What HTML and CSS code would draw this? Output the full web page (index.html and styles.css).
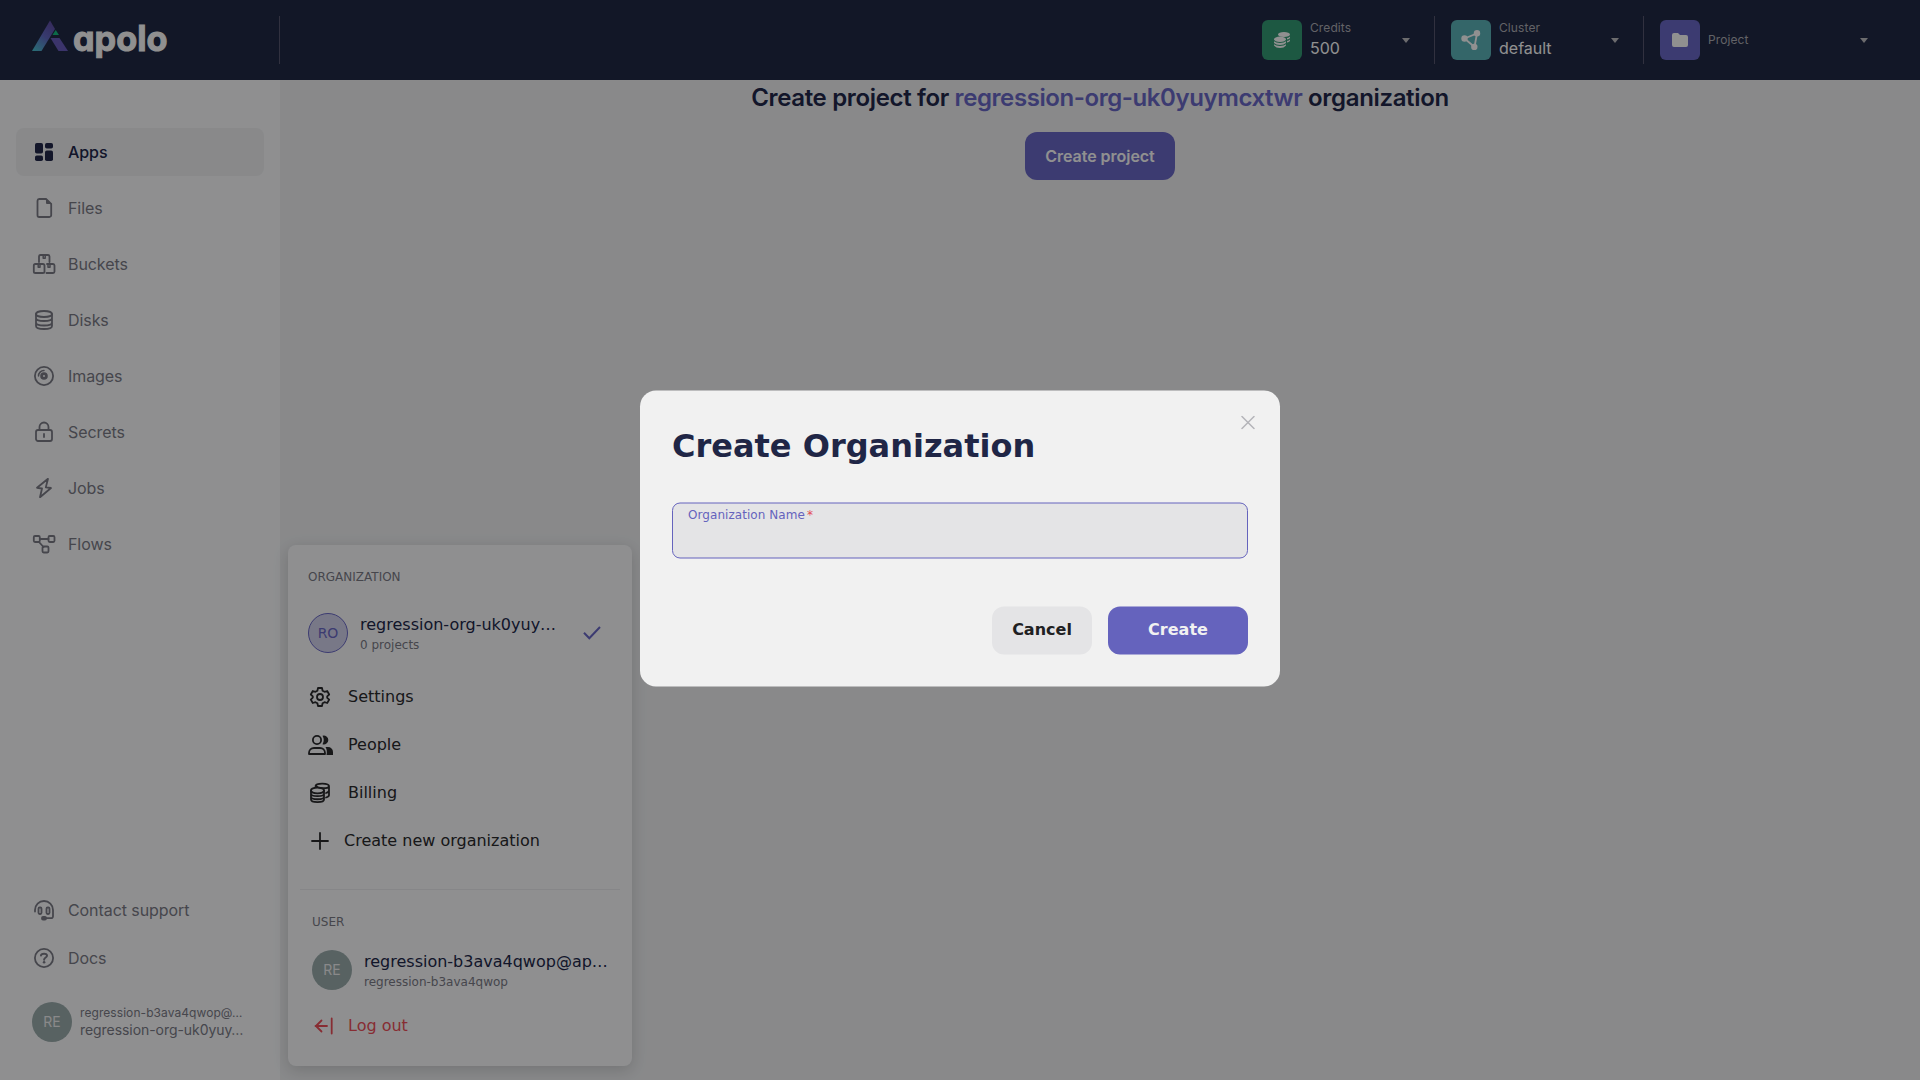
FILE: index.html
```html
<!DOCTYPE html>
<html lang="en">
<head>
<meta charset="utf-8">
<title>Apolo Console</title>
<link rel="stylesheet" href="styles.css">
</head>
<body>
<div class="app">
  <header class="header">
    <div class="brand">
      <svg class="logo" width="140" height="48" viewBox="0 0 140 48">
        <defs>
          <linearGradient id="g1" x1="0.1" y1="1" x2="0.7" y2="0"><stop offset="0" stop-color="#46b4c4"/><stop offset=".55" stop-color="#5c62b8"/><stop offset="1" stop-color="#5a4a9c"/></linearGradient>
        </defs>
        <path d="M18 4.500L23 13L9.500 35H0Z" fill="url(#g1)"/>
        <path d="M18.500 22H27.500L36 35H26.500Z" fill="#6358b2"/>
        <path d="M23.700 14L27 19H20.500Z" fill="#14b27a"/>
        <text class="logo-text" x="41" y="35" textLength="94.500" lengthAdjust="spacingAndGlyphs">apolo</text>
      </svg>
    </div>
    <div class="switchers">
      <div class="switcher credits">
        <span class="tile green"><svg width="16" height="16" viewBox="0 0 16 16" fill="currentColor"><ellipse cx="10" cy="2.500" rx="6" ry="2.500"/><ellipse cx="6" cy="7.300" rx="6" ry="2.700"/><path d="M0 9.300Q2 11 6 11T12 9.300V11Q10 13 6 13T0 11ZM0 12.300Q2 14 6 14T12 12.300V13.500Q10 16 6 16T0 13.500ZM13 6Q15 5.500 16 4.500V6Q15.300 7 13 7.600ZM13 9Q15 8.500 16 7.500V9Q15 10.200 13 10.600Z"/></svg></span>
        <span class="meta"><small>Credits</small><b>500</b></span><i class="caret"></i>
      </div>
      <div class="switcher cluster">
        <span class="tile teal"><svg width="20" height="20" viewBox="0 0 20 20"><path d="M3.500 8.500L16 3.500L13.500 17Z" fill="none" stroke="currentColor" stroke-width="1.800"/><g fill="currentColor"><circle cx="3.500" cy="8.500" r="3.200"/><circle cx="16" cy="3.300" r="3.200"/><circle cx="13.300" cy="17" r="3.200"/></g></svg></span>
        <span class="meta"><small>Cluster</small><b>default</b></span><i class="caret"></i>
      </div>
      <div class="switcher project">
        <span class="tile purple"><svg width="16" height="14" viewBox="0 0 16 14" fill="currentColor"><path d="M2 0H6L8 2H14A2 2 0 0 1 16 4V12A2 2 0 0 1 14 14H2A2 2 0 0 1 0 12V2A2 2 0 0 1 2 0Z"/></svg></span>
        <span class="meta"><small>Project</small></span><i class="caret"></i>
      </div>
    </div>
  </header>
  <div class="body">
    <aside class="sidebar">
      <nav class="nav">
        <a class="item active"><svg class="icon" viewBox="0 0 24 24"><g fill="currentColor"><rect x="3" y="3" width="8" height="10.500" rx="1.800"/><rect x="13" y="3" width="8" height="5.500" rx="1.800"/><rect x="3" y="15.500" width="8" height="5.500" rx="1.800"/><rect x="13" y="10.500" width="8" height="10.500" rx="1.800"/></g></svg>Apps</a>
        <a class="item"><svg class="icon" viewBox="0 0 24 24"><path d="M7.200 3H14L19.200 8V19.200A1.800 1.800 0 0 1 17.400 21H7.200A1.800 1.800 0 0 1 5.500 19.200V4.700A1.800 1.800 0 0 1 7.200 3Z"/><path d="M14 2.500L19.500 8H15A1 1 0 0 1 14 7Z" fill="currentColor" stroke="none"/></svg>Files</a>
        <a class="item"><svg class="icon" viewBox="0 0 24 24"><path d="M7 10V4.500A1.500 1.500 0 0 1 8.500 3H16A1.500 1.500 0 0 1 17.500 4.500V10"/><rect x="1.800" y="12" width="10.700" height="9" rx="1.600"/><path d="M15 12H21A1.600 1.600 0 0 1 22.500 13.600V19.400A1.600 1.600 0 0 1 21 21H14.500"/><path d="M11.200 3.500V6.200H13.200V3.500M6.200 12.500V15.200H8V12.500M16 12.500V15.200H18V12.500" stroke-width="1.500"/></svg>Buckets</a>
        <a class="item"><svg class="icon" viewBox="0 0 24 24"><ellipse cx="12" cy="6" rx="8" ry="3"/><path d="M4 6V18C4 22 20 22 20 18V6M4 10C4 14 20 14 20 10M4 14.500C4 18.500 20 18.500 20 14.500"/></svg>Disks</a>
        <a class="item"><svg class="icon" viewBox="0 0 24 24"><circle cx="12" cy="12" r="9.100"/><circle cx="12" cy="12" r="2.400" stroke-width="2.800"/><path d="M6.500 12A5.500 5.500 0 0 1 12 6.500" stroke-width="1.500"/></svg>Images</a>
        <a class="item"><svg class="icon" viewBox="0 0 24 24"><rect x="4" y="10" width="16" height="11" rx="2"/><path d="M7.500 10V7A4.400 4.400 0 0 1 16.500 7V10M12 14V17"/></svg>Secrets</a>
        <a class="item"><svg class="icon" viewBox="0 0 24 24"><path d="M16 2.800L5 11.800L10 12.500L8 21.200L19 12L13.800 11.400Z"/></svg>Jobs</a>
        <a class="item"><svg class="icon" viewBox="0 0 24 24"><rect x="1.800" y="4" width="6" height="6" rx="1.200"/><rect x="16.500" y="4" width="6" height="6" rx="1.200"/><rect x="10.500" y="14.500" width="6" height="6" rx="1.200"/><path d="M8 7H16.500M7 10L11.500 15"/></svg>Flows</a>
      </nav>
      <div class="foot">
        <a class="item"><svg class="icon" viewBox="0 0 24 24"><path d="M3 13.500V12A9 9 0 0 1 21 12V18.300A1.800 1.800 0 0 1 19.200 20.200H13"/><rect x="6.500" y="9.500" width="3" height="6.500" rx="1.200"/><rect x="14.500" y="9.500" width="3" height="6.500" rx="1.200"/><rect x="10" y="19" width="4" height="2.500" rx="1" fill="currentColor"/></svg>Contact support</a>
        <a class="item"><svg class="icon" viewBox="0 0 24 24"><circle cx="12" cy="12" r="9.100"/><path d="M9 9.500C9.200 7.200 15 6.800 15 9.800C15 11.600 12.100 11.500 12.100 13.700" stroke-width="2"/><circle cx="12.100" cy="16.300" r="1.300" fill="currentColor" stroke="none"/></svg>Docs</a>
      </div>
      <div class="account">
        <span class="avatar grey">RE</span>
        <span class="who"><small>regression-b3ava4qwop@…</small><b>regression-org-uk0yuy…</b></span>
      </div>
    </aside>
    <main class="main">
      <h1>Create project for <em>regression-org-uk0yuymcxtwr</em> organization</h1>
      <button class="primary">Create project</button>
    </main>
  </div>
</div>

<section class="menu">
  <h2 class="caption">ORGANIZATION</h2>
  <div class="person org">
    <span class="avatar lilac">RO</span>
    <span class="lines"><b>regression-org-uk0yuy…</b><small>0 projects</small></span>
    <svg class="check" width="18" height="14" viewBox="0 0 18 14"><path d="M1 6.800L6.300 12.300L17 1" /></svg>
  </div>
  <a class="row"><svg class="icon" viewBox="0 0 24 24"><path d="M10 3H14L14.600 5.700L16.500 6.800L19.200 6L21.200 9.500L19.200 11.400V12.800L21.200 14.600L19.200 18L16.500 17.200L14.600 18.300L14 21H10L9.400 18.300L7.500 17.200L4.800 18L2.800 14.600L4.800 12.700V11.400L2.800 9.500L4.800 6L7.500 6.800L9.400 5.700Z"/><circle cx="12" cy="12" r="3"/></svg><span>Settings</span></a>
  <a class="row"><svg class="icon wide" viewBox="0 0 25 24"><circle cx="9" cy="7" r="4.100"/><path d="M1 21V20A5 5 0 0 1 6 15H12A5 5 0 0 1 17 20V21Z"/><path d="M14.500 2.700A4.500 4.500 0 1 1 14.500 11.300Q17 7 14.500 2.700ZM17.500 14H20A5 5 0 0 1 25 19V22H18.500Q19.500 17 17.500 14Z" fill="currentColor" stroke="none"/></svg><span>People</span></a>
  <a class="row"><svg class="icon" viewBox="0 0 24 24"><ellipse cx="9.500" cy="9.500" rx="6.500" ry="2.800"/><path d="M3 9.500V18.500C3 22 16 22 16 18.500V9.500M3 12.800C3 16 16 16 16 12.800M3 16C3 19 16 19 16 16M7.500 5.200C8 1.800 21 1.800 21 5.500V14C21 15 20 16 18 16.500M8 4.500C9 7.500 21 8.500 21 5M21 9.500C21 10.700 20 11.300 18 12"/></svg><span>Billing</span></a>
  <a class="row create"><svg class="icon" viewBox="0 0 24 24"><path d="M12 4V20M4 12H20"/></svg><span>Create new organization</span></a>
  <hr>
  <h2 class="caption user">USER</h2>
  <div class="person">
    <span class="avatar grey">RE</span>
    <span class="lines"><b>regression-b3ava4qwop@ap…</b><small>regression-b3ava4qwop</small></span>
  </div>
  <a class="row logout"><svg class="icon" viewBox="0 0 24 24"><path d="M15 12H3.500M9.500 6.500L4 12L9.500 17.500M19.700 4.500V19.500"/></svg><span>Log out</span></a>
</section>

<div class="overlay">
  <form class="modal">
    <svg class="close" width="14" height="14" viewBox="0 0 14 14"><path d="M1 1L13 13M13 1L1 13"/></svg>
    <h2>Create Organization</h2>
    <label class="field"><span>Organization Name<i>*</i></span></label>
    <div class="actions"><button class="cancel" type="button">Cancel</button><button class="submit" type="button">Create</button></div>
  </form>
</div>
</body>
</html>
```
FILE: styles.css
```css
* { box-sizing: border-box; }
body { margin: 0; height: 1080px; overflow: hidden; background: #e4e5e7; font: 16px/24px Inter, sans-serif; color: #202646; }
small, b, em, i { font-weight: 400; font-style: normal; }
button { border: 0; font: inherit; }
.app { display: flex; flex-direction: column; height: 1080px; }

.header { display: flex; justify-content: space-between; height: 80px; padding: 16px 36px 16px 0; background: #1f2742; }
.brand { width: 280px; padding-left: 32px; border-right: 1px solid #53526a; }
.logo { display: block; }
.logo-text { font: 700 35px Inter, sans-serif; font-feature-settings: "cv11"; fill: #f1f1f1; stroke: #f1f1f1; stroke-width: 1; }
.switchers { display: flex; }
.switcher { display: flex; align-items: center; gap: 8px; padding: 0 24px 0 16px; }
.switcher + .switcher { border-left: 1px solid #53526a; }
.credits { width: 188px; }
.cluster { width: 209px; }
.project { width: 241px; padding-right: 16px; }
.tile { display: grid; place-items: center; width: 40px; height: 40px; border-radius: 6px; color: #f1f1f1; }
.green { background: #31936f; }
.teal { background: #58abaf; }
.purple { background: #6563bd; }
.meta { display: flex; flex-direction: column; flex: 1; color: #f1f1f1; }
.meta small { font-size: 12px; line-height: 16px; color: #a4a4aa; letter-spacing: .1px; }
.meta b { line-height: 24px; }
.caret { border: 4px solid transparent; border-top: 5px solid #b4b4b8; border-bottom: 0; }

.body { display: flex; flex: 1; }
.sidebar { display: flex; flex-direction: column; width: 280px; padding: 48px 16px 38px; background: #eeeff1; color: #75757f; }
.nav { display: flex; flex-direction: column; gap: 8px; }
.item { display: flex; align-items: center; gap: 12px; height: 48px; padding: 0 16px; border-radius: 8px; letter-spacing: -.08px; }
.active { background: #e4e5e7; color: #202646; font-weight: 500; }
.icon { flex: none; width: 24px; height: 24px; fill: none; stroke: currentColor; stroke-width: 1.8; stroke-linejoin: round; stroke-linecap: round; }
.active .icon { stroke: none; }
.foot { margin-top: auto; }
.account { display: flex; gap: 8px; align-items: center; padding: 20px 16px 0; }
.avatar { display: grid; place-items: center; flex: none; width: 40px; height: 40px; border-radius: 50%; font-size: 14px; }
.grey { background: #93a3a3; color: #e4e4e6; }
.who { display: flex; flex-direction: column; white-space: nowrap; }
.who small { font-size: 12px; line-height: 16px; letter-spacing: .07px; }
.who b { font-size: 14px; line-height: 18px; letter-spacing: -.06px; }

.main { flex: 1; display: flex; flex-direction: column; align-items: center; gap: 16px; }
h1 { margin: 0; font-size: 24px; line-height: 36px; font-weight: 600; letter-spacing: -.34px; }
h1 em { color: #6563bd; font-weight: 600; letter-spacing: -.42px; }
.primary { height: 48px; padding: 0 20px; border-radius: 12px; background: #6563bd; color: #f1f1f1; font-weight: 600; letter-spacing: -.03px; }

.menu { position: absolute; left: 288px; top: 545px; width: 344px; height: 521px; padding: 20px 12px; border-radius: 8px; background: #eeeff1; box-shadow: 0 4px 16px rgba(0,0,0,.16); font: 16px/24px "DejaVu Sans", sans-serif; color: #28282b; }
.caption { margin: 0 8px; font-size: 12px; line-height: 24px; font-weight: 400; color: #75757f; }
.caption.user { margin: 20px 12px 16px; }
.person { display: flex; align-items: center; gap: 12px; height: 40px; margin-left: 12px; }
.person.org { margin: 24px 8px 20px; }
.person .lines { display: flex; flex-direction: column; flex: 1; white-space: nowrap; }
.lines b { line-height: 24px; color: #202646; }
.lines small { font-size: 12px; line-height: 16px; color: #75757f; }
.lilac { border: 1px solid #6563bd; background: #c9c9e1; color: #6563bd; }
.menu .avatar { font-family: "DejaVu Sans", sans-serif; }
.menu .avatar.grey { font-family: Inter, sans-serif; }
.check { margin-right: 11px; fill: none; stroke: #6563bd; stroke-width: 2; }
.row { display: flex; align-items: center; gap: 16px; height: 48px; padding-left: 8px; }
.icon.wide { width: 25px; margin-right: -1px; }
.create { gap: 12px; }
.menu hr { height: 1px; margin: 24px 0 0; border: 0; background: #e0e0e3; }
.logout { height: 24px; margin-top: 24px; padding-left: 12px; gap: 12px; color: #e24b55; }

.overlay { position: fixed; inset: 0; display: grid; place-items: center; background: rgba(0,0,0,.4); font-family: "DejaVu Sans", sans-serif; }
.modal { position: relative; width: 640px; height: 296px; padding: 32px; border-radius: 16px; background: #f1f1f1; transform: translateY(-1.5px); }
.modal h2 { margin: 0; padding-bottom: 33px; font-size: 32px; line-height: 47px; font-weight: 700; }
.close { position: absolute; right: 25px; top: 25px; fill: none; stroke: #b4b4b9; stroke-width: 1.5; stroke-linecap: round; }
.field { display: block; height: 56px; padding: 3px 15px; border: 1px solid #6563bd; border-radius: 8px; background: #e4e4e6; color: #6563bd; font-size: 12px; line-height: 16px; letter-spacing: .06px; }
.field i { margin-left: 2px; color: #e24b55; }
.actions { display: flex; justify-content: flex-end; gap: 16px; margin-top: 48px; }
.actions button { height: 48px; padding-bottom: 3px; border-radius: 12px; font-weight: 700; }
.cancel { width: 100px; background: #e4e4e6; color: #202022; }
.submit { width: 140px; background: #6563bd; color: #f1f1f1; }
```
